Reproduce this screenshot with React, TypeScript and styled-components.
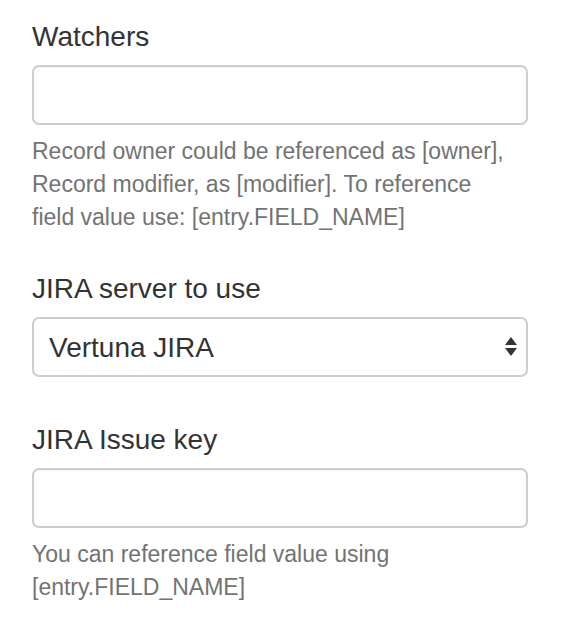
import styled, { createGlobalStyle } from "styled-components";

const GlobalStyle = createGlobalStyle`
  html, body {
    margin: 0;
    padding: 0;
    background: #fff;
  }
  body {
    font-family: "Liberation Sans", Arial, Helvetica, sans-serif;
    color: #333;
  }
`;

const Form = styled.form`
  width: 496px;
  margin: 0 0 0 32px;
  padding-top: 18px;
  display: flex;
  flex-direction: column;
`;

const Group = styled.div<{ $hasHelp?: boolean }>`
  display: flex;
  flex-direction: column;
  padding-bottom: ${(p) => (p.$hasHelp ? "36px" : "44px")};
`;

const Label = styled.label`
  font-size: 28px;
  line-height: 38px;
  color: #333;
  margin-bottom: 9px;
`;

const TextInput = styled.input`
  box-sizing: border-box;
  width: 100%;
  height: 60px;
  border: 2px solid #cdcdcd;
  border-radius: 7px;
  padding: 0 16px;
  font: inherit;
  font-size: 28px;
  color: #333;
  background: #fff;
  box-shadow: inset 0 1px 1px rgba(0, 0, 0, 0.05);
  outline: none;
`;

const SelectWrap = styled.div`
  position: relative;
  width: 100%;
`;

const Select = styled.select`
  box-sizing: border-box;
  width: 100%;
  height: 60px;
  border: 2px solid #cdcdcd;
  border-radius: 7px;
  padding: 0 40px 0 15px;
  font-family: inherit;
  font-size: 28px;
  color: #333;
  background: #fff;
  appearance: none;
  -webkit-appearance: none;
  outline: none;
`;

const Arrows = styled.svg`
  position: absolute;
  right: 10px;
  top: 50%;
  transform: translateY(-50%);
  pointer-events: none;
`;

const Help = styled.p`
  margin: 10px 0 0;
  font-size: 23px;
  line-height: 33px;
  color: #737373;
`;

function App() {
  return (
    <>
      <GlobalStyle />
      <Form>
        <Group $hasHelp>
          <Label>Watchers</Label>
          <TextInput type="text" />
          <Help>
            Record owner could be referenced as [owner],
            <br />
            Record modifier, as [modifier]. To reference
            <br />
            field value use: [entry.FIELD_NAME]
          </Help>
        </Group>

        <Group>
          <Label>JIRA server to use</Label>
          <SelectWrap>
            <Select defaultValue="vertuna">
              <option value="vertuna">Vertuna JIRA</option>
            </Select>
            <Arrows width="14" height="22" viewBox="0 0 14 22">
              <path d="M7 1 L13 9 L1 9 Z" fill="#333" />
              <path d="M1 12 L13 12 L7 20 Z" fill="#333" />
            </Arrows>
          </SelectWrap>
        </Group>

        <Group $hasHelp>
          <Label>JIRA Issue key</Label>
          <TextInput type="text" />
          <Help>
            You can reference field value using
            <br />
            [entry.FIELD_NAME]
          </Help>
        </Group>
      </Form>
    </>
  );
}

export default App;
